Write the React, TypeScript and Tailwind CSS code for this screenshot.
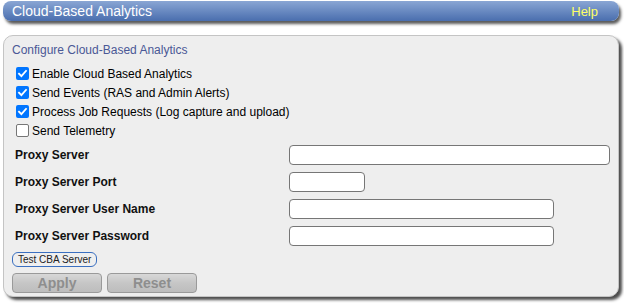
import React from "react";

function Check({ checked }: { checked: boolean }) {
  return checked ? (
    <span className="w-[13px] h-[13px] rounded-[2px] bg-[#0075ff] flex items-center justify-center shrink-0">
      <svg width="11" height="11" viewBox="0 0 12 12">
        <path d="M2.2 6.3 L4.8 8.8 L9.8 3.2" stroke="white" strokeWidth="2" fill="none" strokeLinecap="square" />
      </svg>
    </span>
  ) : (
    <span className="w-[13px] h-[13px] rounded-[2px] border border-[#767676] bg-white shrink-0" />
  );
}

export default function App() {
  const checks: [string, boolean][] = [
    ["Enable Cloud Based Analytics", true],
    ["Send Events (RAS and Admin Alerts)", true],
    ["Process Job Requests (Log capture and upload)", true],
    ["Send Telemetry", false],
  ];
  const fields: [string, string][] = [
    ["Proxy Server", "w-[321px]"],
    ["Proxy Server Port", "w-[76px]"],
    ["Proxy Server User Name", "w-[265px]"],
    ["Proxy Server Password", "w-[265px]"],
  ];
  return (
    <div className="w-[624px] h-[307px] bg-white font-['Liberation_Sans',Arial,sans-serif] pt-[1px] pl-[3px] pr-[5px]">
      <div className="h-[20px] rounded-[8px] bg-gradient-to-b from-[#8aa6d4] to-[#4a6eae] shadow-[2px_3px_3px_rgba(0,0,0,0.65)] flex items-center justify-between pl-[9px] pr-[21px]">
        <span className="text-white text-[14px] leading-none">Cloud-Based Analytics</span>
        <span className="text-[#ffff66] text-[13px] leading-none">Help</span>
      </div>
      <div className="mt-[14px] h-[262px] rounded-[10px] border border-[#c4c4c4] bg-[#eeeeee] shadow-[3px_3px_3px_rgba(0,0,0,0.7)] pl-[8px] pt-[7px]">
        <div className="text-[12px] text-[#4a5896] leading-[14px]">Configure Cloud-Based Analytics</div>
        <div className="mt-[7px] flex flex-col pl-[4px]">
          {checks.map(([l, c]) => (
            <div key={l} className="h-[19px] flex items-center gap-[3px]">
              <Check checked={c} />
              <span className="text-[12px] text-black leading-none">{l}</span>
            </div>
          ))}
        </div>
        <div className="mt-[5px] flex flex-col gap-[7px]">
          {fields.map(([l, w]) => (
            <div key={l} className="h-[20px] flex items-center">
              <span className="w-[277px] pl-[3px] text-[12px] font-bold text-[#111] leading-none">{l}</span>
              <div className={`${w} h-[20px] rounded-[4px] border border-[#767676] bg-white`} />
            </div>
          ))}
        </div>
        <div className="mt-[6px] flex">
          <div className="h-[15px] px-[5px] rounded-[6px] border border-[#3a6fc0] bg-[#efefef] text-[10px] text-[#222] flex items-center leading-none">
            Test CBA Server
          </div>
        </div>
        <div className="mt-[6px] flex gap-[5px]">
          {["Apply", "Reset"].map((b) => (
            <div
              key={b}
              className="w-[90px] h-[20px] rounded-[4px] border border-[#9a9a9a] bg-gradient-to-b from-[#d8d8d8] via-[#c6c6c6] to-[#bdbdbd] flex items-center justify-center text-[14px] font-bold text-[#8e8e8e] leading-none"
            >
              {b}
            </div>
          ))}
        </div>
      </div>
    </div>
  );
}
